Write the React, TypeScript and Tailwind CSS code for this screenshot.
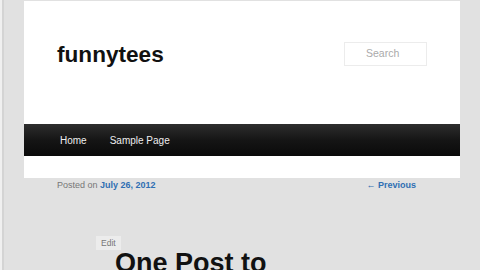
export default function App() {
  return (
    <div className="flex h-[270px] w-[480px] overflow-hidden bg-[#e1e1e1] font-['Liberation_Sans',Arial,sans-serif]">
      <div className="flex w-[4px] shrink-0">
        <div className="w-[2px] bg-[#f0f0f0]" />
        <div className="w-[2px] bg-[#d4d4d4]" />
      </div>
      <div className="ml-[20px] flex w-[436px] shrink-0 flex-col pt-px">
        <div className="flex h-[123px] shrink-0 items-start justify-between bg-white px-[33px]">
          <h1 className="mt-[41px] text-[22.6px] font-bold leading-[26px] text-[#111]">funnytees</h1>
          <div className="mt-[41px] flex h-[24px] w-[83px] items-center border border-[#ececec] pl-[21px] text-[10.5px] text-[#aaa]">
            Search
          </div>
        </div>
        <div className="flex h-[32px] shrink-0 items-center gap-[23px] bg-gradient-to-b from-[#2e2e2e] via-[#151515] to-[#0a0a0a] pl-[36px] text-[10px] text-[#eee]">
          <span>Home</span>
          <span>Sample Page</span>
        </div>
        <div className="h-[22px] shrink-0 bg-white" />
        <div className="mt-[1px] flex shrink-0 items-center justify-between pl-[33px] pr-[44px] text-[9px] leading-[12px]">
          <span className="text-[#777]">
            Posted on <span className="font-bold text-[#2f6fb3]">July 26, 2012</span>
          </span>
          <span className="font-bold text-[#2f6fb3]">
            <span className="font-normal">←</span> Previous
          </span>
        </div>
        <div className="ml-[72px] mt-[45px] flex shrink-0 flex-col items-start">
          <span className="bg-[#ececec] px-[5px] py-[2px] text-[8.5px] leading-[10px] text-[#777]">Edit</span>
          <h2 className="-mt-[2px] ml-[19px] text-[27px] font-bold leading-[30px] text-[#111]">One Post to</h2>
        </div>
      </div>
    </div>
  );
}
